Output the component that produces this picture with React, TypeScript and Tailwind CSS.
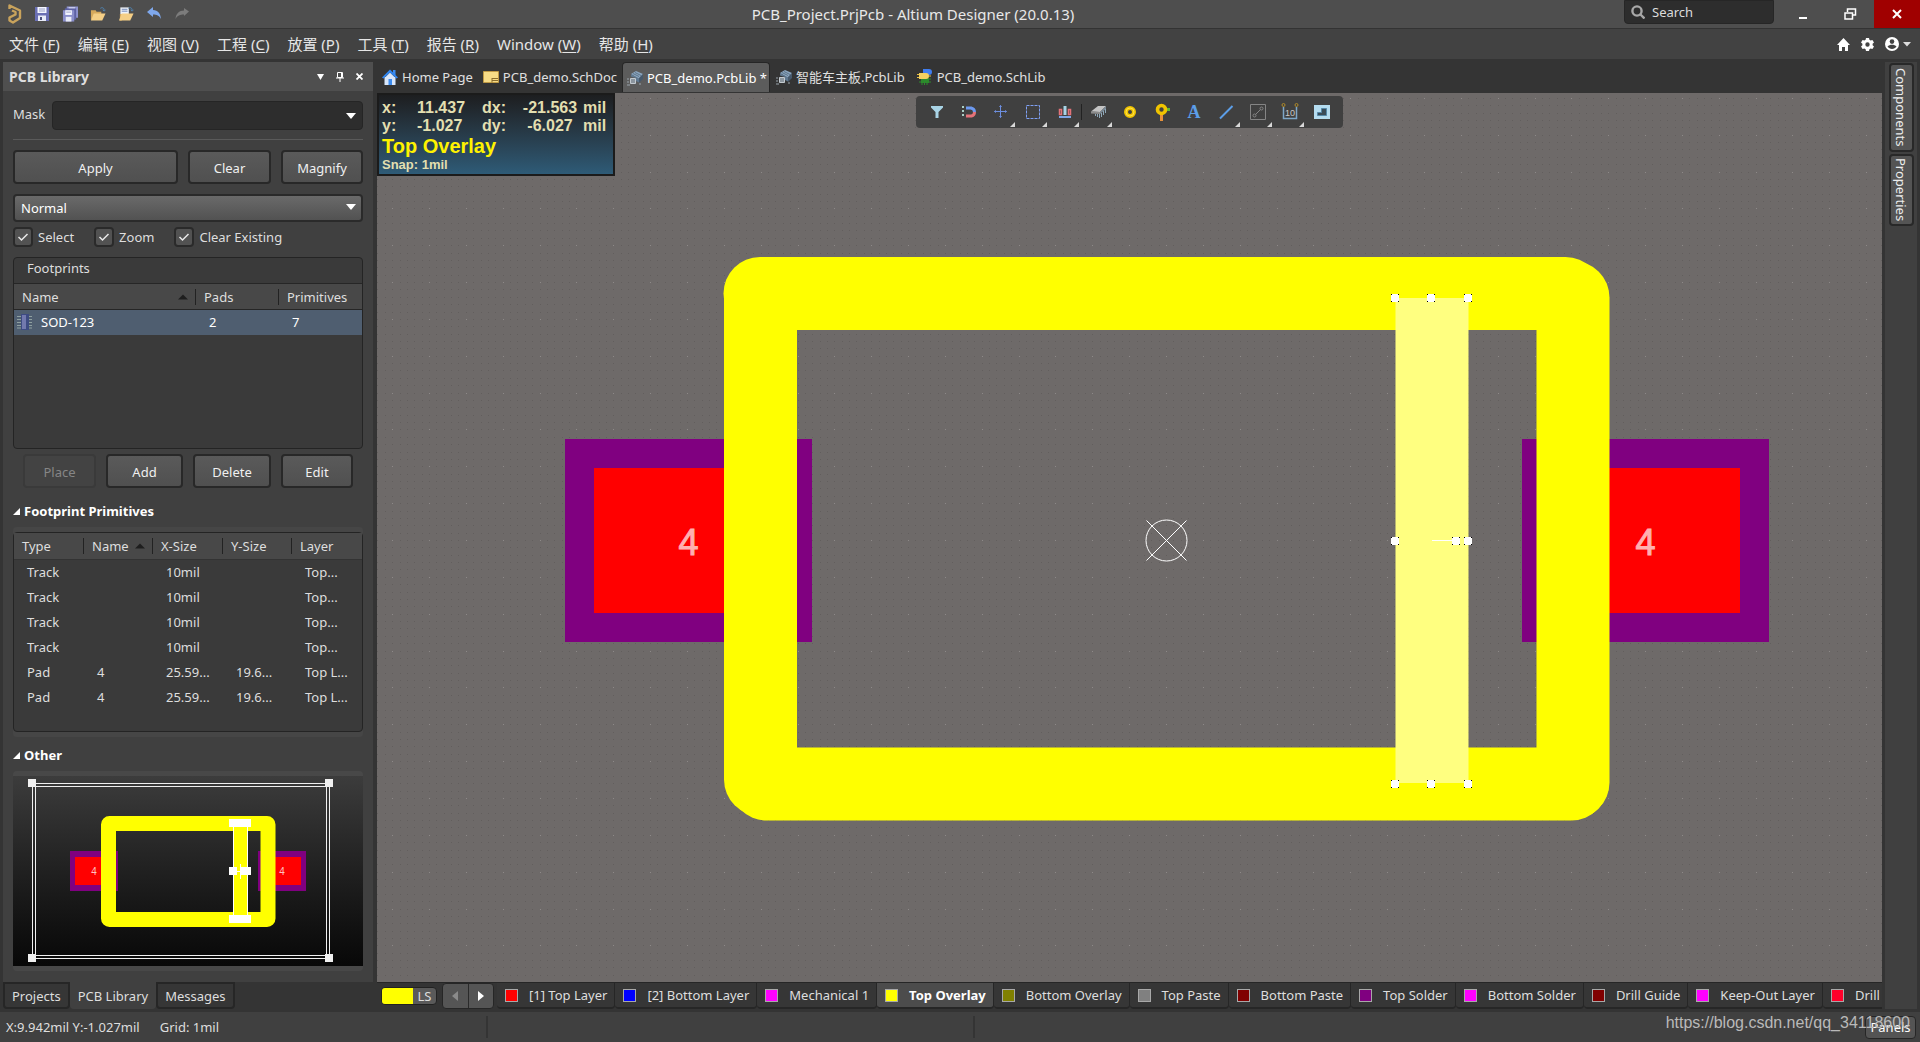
import type { ReactNode } from 'react';

const FONT = "font-['Noto_Sans','Noto_Sans_CJK_SC',sans-serif]";

const menus = [
  ['文件', 'F'],
  ['编辑', 'E'],
  ['视图', 'V'],
  ['工程', 'C'],
  ['放置', 'P'],
  ['工具', 'T'],
  ['报告', 'R'],
  ['Window', 'W'],
  ['帮助', 'H'],
];

const primitives = [
  ['Track', '', '10mil', '', 'Top...'],
  ['Track', '', '10mil', '', 'Top...'],
  ['Track', '', '10mil', '', 'Top...'],
  ['Track', '', '10mil', '', 'Top...'],
  ['Pad', '4', '25.59...', '19.6...', 'Top L...'],
  ['Pad', '4', '25.59...', '19.6...', 'Top L...'],
];

const layers = [
  { name: '[1] Top Layer', color: 'bg-[#ff0000]' },
  { name: '[2] Bottom Layer', color: 'bg-[#0000ff]' },
  { name: 'Mechanical 1', color: 'bg-[#ff00ff]' },
  { name: 'Top Overlay', color: 'bg-[#ffff00]', active: true },
  { name: 'Bottom Overlay', color: 'bg-[#808000]' },
  { name: 'Top Paste', color: 'bg-[#808080]' },
  { name: 'Bottom Paste', color: 'bg-[#800000]' },
  { name: 'Top Solder', color: 'bg-[#800080]' },
  { name: 'Bottom Solder', color: 'bg-[#ff00ff]' },
  { name: 'Drill Guide', color: 'bg-[#800000]' },
  { name: 'Keep-Out Layer', color: 'bg-[#ff00ff]' },
  { name: 'Drill Drawing', color: 'bg-[#ff002a]' },
];

function Logo() {
  return (
    <svg width="14" height="20" viewBox="0 0 14 20" fill="none" stroke="#c9a35c" strokeWidth="2.4">
      <path d="M1.5 5V1.5L12 6.5V14L5 18.5 1.5 16.5v-3L7.5 10.5V8L4 6.5" strokeLinejoin="round" />
    </svg>
  );
}

function SaveIcon() {
  return (
    <svg width="16" height="16" viewBox="0 0 16 16">
      <path d="M1 1h14v14H1z" fill="#6a6fb4" />
      <path d="M3.5 1h9v6h-9z" fill="#f4f6ff" />
      <path d="M5 3h6M5 5h6" stroke="#9aa0c4" />
      <path d="M4 9.5h8V15H4z" fill="#e8ebf8" />
      <path d="M6 11h2v3H6z" fill="#4a4f7c" />
    </svg>
  );
}

function SaveAllIcon() {
  return (
    <svg width="17" height="16" viewBox="0 0 17 16">
      <path d="M5 0h12v12H5z" fill="#8f93cf" />
      <path d="M7 1h7v3H7z" fill="#eef0ff" />
      <path d="M3 2h12v12H3z" fill="#5d61a4" />
      <path d="M1 4h12v12H1z" fill="#8a8ecb" />
      <path d="M3.5 4h7v5h-7z" fill="#f4f6ff" />
      <path d="M4.5 6h5" stroke="#9aa0c4" />
      <path d="M4 11h6v5H4z" fill="#e8ebf8" />
    </svg>
  );
}

function OpenIcon({ doc }: { doc?: boolean }) {
  return (
    <svg width="17" height="16" viewBox="0 0 17 16">
      {doc && <path d="M2.5 1h9v9h-9z" fill="#eef2f8" />}
      {doc && <path d="M4 3h6M4 5h6" stroke="#6f86b8" />}
      {doc && <path d="M2 8h2v7H2z" fill="#d6a95c" />}
      {!doc && <path d="M1 4h5l1 1.5h5V14H1z" fill="#d6a95c" />}
      <path d="M4 7.5h12.5L13 15H1z" fill="#f5cf86" />
      <path d="M11 2c2-1.5 4-.5 4 2M13.5 3.5L15 5l1.5-1.5" fill="none" stroke="#4f86b8" />
    </svg>
  );
}

function UndoIcon() {
  return (
    <svg width="16" height="14" viewBox="0 0 16 14">
      <path d="M1 5l6-5v3c5 0 7.5 3.5 8 9-2-3.5-4-4.5-8-4.5V10z" fill="#7fa8ec" />
    </svg>
  );
}

function RedoIcon() {
  return (
    <svg width="16" height="14" viewBox="0 0 16 14">
      <path d="M15 4.5L10 1v2.5C5 3.5 2 6.5 1.5 12c2-3.5 4.5-4.5 8.5-4.5V9z" fill="#7c7c7c" />
    </svg>
  );
}

function Caret({ className }: { className?: string }) {
  return (
    <svg width="10" height="6" viewBox="0 0 10 6" className={className}>
      <path d="M0 0h10L5 6z" fill="#fff" />
    </svg>
  );
}

function TitleBar() {
  return (
    <header className="flex h-[29px] shrink-0 items-start border-b border-[#333] bg-[#4e4e4e]">
      <div className="flex h-7 items-center gap-3 pl-2">
        <Logo />
        <button aria-label="Save" className="flex w-4 justify-center"><SaveIcon /></button>
        <button aria-label="Save all" className="flex w-4 justify-center"><SaveAllIcon /></button>
        <button aria-label="Open" className="flex w-4 justify-center"><OpenIcon /></button>
        <button aria-label="Open project" className="flex w-4 justify-center"><OpenIcon doc /></button>
        <button aria-label="Undo" className="flex w-4 justify-center"><UndoIcon /></button>
        <button aria-label="Redo" className="flex w-4 justify-center"><RedoIcon /></button>
      </div>
      <h1 className="flex-1 pl-3 text-center text-[15px] leading-7 text-[#e8e8e8]">
        PCB_Project.PrjPcb - Altium Designer (20.0.13)
      </h1>
      <label className="mr-[5px] flex h-6 w-[150px] items-center gap-[7px] rounded-b border border-[#262626] bg-[#2d2d2d] px-1.5">
        <svg width="14" height="14" viewBox="0 0 14 14" fill="none" stroke="#a8a8a8" strokeWidth="2.4" className="shrink-0">
          <circle cx="6" cy="6" r="4.6" />
          <path d="M9.5 9.5L13.5 13.5" />
        </svg>
        <input aria-label="Search" placeholder="Search" className="w-full min-w-0 bg-transparent text-[13px] leading-5 text-white outline-none placeholder:text-[#dcdcdc]" />
      </label>
      <button aria-label="Minimize" className="flex h-7 w-[47px] items-center justify-center">
        <svg width="10" height="12"><path d="M1 9h8v2H1z" fill="#fff" /></svg>
      </button>
      <button aria-label="Restore" className="flex h-7 w-12 items-center justify-center">
        <svg width="13" height="12" fill="none" stroke="#fff" strokeWidth="1.5">
          <path d="M3.5 4V1h8v6H8.5" />
          <path d="M1 5h7.5v6H1z" />
        </svg>
      </button>
      <button aria-label="Close" className="flex h-7 w-[46px] items-center justify-center bg-[#a00000]">
        <svg width="10" height="10"><path d="M1 1l8 8M9 1L1 9" stroke="#fff" strokeWidth="2" /></svg>
      </button>
    </header>
  );
}

function MenuBar() {
  return (
    <nav className="flex h-[30px] shrink-0 items-center justify-between bg-[#424242] px-[9px]">
      <div className="flex gap-[18px]">
        {menus.map(([label, key]) => (
          <button key={key} className="text-[15px] leading-6 text-[#e6e6e6]">
            {label} (<span className="underline underline-offset-2">{key}</span>)
          </button>
        ))}
      </div>
      <div className="flex items-center gap-[11px]">
        <button aria-label="Home">
          <svg width="13" height="13" viewBox="0 0 13 13"><path d="M6.5 0L13 7h-2v6H8V9H5v4H2V7H0z" fill="#fff" /></svg>
        </button>
        <button aria-label="Settings">
          <svg width="13" height="13" viewBox="0 0 13 13">
            <path fillRule="evenodd" fill="#fff" d="M5 0h3l.4 1.8 1.2.7 1.8-.6L13 4.5l-1.4 1.3v1.4L13 8.5l-1.6 2.6-1.8-.6-1.2.7L8 13H5l-.4-1.8-1.2-.7-1.8.6L0 8.500l1.400-1.300V5.800L0 4.500l1.600-2.600 1.800.6 1.200-.7zM6.5 4.3a2.2 2.2 0 100 4.4 2.2 2.2 0 000-4.4z" />
          </svg>
        </button>
        <button aria-label="Account" className="flex items-center gap-1">
          <svg width="14" height="14" viewBox="0 0 14 14">
            <circle cx="7" cy="7" r="7" fill="#fff" />
            <circle cx="7" cy="4.6" r="2.3" fill="#424242" />
            <path d="M2.5 9.5c2-2.5 7-2.5 9 0-2 3.3-7 3.3-9 0z" fill="#424242" />
          </svg>
          <svg width="8" height="5"><path d="M0 0h8L4 4.5z" fill="#ddd" /></svg>
        </button>
      </div>
    </nav>
  );
}

function PanelButton({ children, className, disabled }: { children: ReactNode; className?: string; disabled?: boolean }) {
  const look = disabled
    ? 'border-[#3a3a3a] bg-[#434343] text-[#868686]'
    : 'border-[#282828] bg-linear-to-b from-[#5a5a5a] to-[#505050] text-[#f0f0f0]';
  return (
    <button disabled={disabled} className={`h-[34px] rounded border-2 pt-px ${look} ${className ?? ''}`}>
      {children}
    </button>
  );
}

function CheckField({ label }: { label: string }) {
  return (
    <label className="flex items-center gap-[5px]">
      <span className="relative flex size-5">
        <input type="checkbox" defaultChecked className="peer size-5 appearance-none rounded border-2 border-[#2a2a2a] bg-[#525252]" />
        <svg width="20" height="20" className="pointer-events-none absolute inset-0 hidden peer-checked:block">
          <path d="M5.5 10l3 3 6-6" fill="none" stroke="#e8e8e8" strokeWidth="1.5" />
        </svg>
      </span>
      {label}
    </label>
  );
}

function SortMark() {
  return <svg width="10" height="6"><path d="M0 5.5h10L5 .5z" fill="#1e1e1e" /></svg>;
}

function HeadCell({ children, last }: { children: ReactNode; last?: boolean }) {
  return (
    <th className="p-0 font-normal">
      <div className={`flex h-4 items-center justify-between pl-2 pr-[7px] text-left ${last ? '' : 'border-r border-[#222]'}`}>
        {children}
      </div>
    </th>
  );
}

function SectionTitle({ children }: { children: ReactNode }) {
  return (
    <h3 className="flex items-center gap-1 text-[13px] font-bold leading-5 text-white">
      <svg width="7" height="7"><path d="M7 0v7H0z" fill="#fff" /></svg>
      {children}
    </h3>
  );
}

function Preview() {
  const corners = [[15, 3], [312, 3], [15, 178], [312, 178]];
  return (
    <div className="h-[200px] rounded bg-[#484848] py-[5px]">
      <svg viewBox="0 0 350 190" className="h-[190px] w-full bg-linear-to-b from-[#3c3c3c] to-[#080808]">
        <path d="M57 75h48v40H57zM245 75h48v40h-48z" fill="#800080" />
        <path d="M62 81h36v28H62zM252 81h36v28h-36z" fill="#f00" />
        <g fill="#ffc0c0" fontSize="10" textAnchor="middle" fontFamily="Liberation Sans, sans-serif">
          <text x="81" y="99">4</text>
          <text x="269" y="99">4</text>
        </g>
        <rect x="95.5" y="47.5" width="159.5" height="96" rx="1" fill="none" stroke="#ff0" strokeWidth="15" strokeLinejoin="round" />
        <path d="M220.5 50.5h14v90h-14z" fill="#ff0" stroke="#fff" />
        <path d="M216 43h22v8h-22zM216 139h22v8h-22zM216 91h8v8h-8zM228 91h10v8h-10zM227 88h1v15h-1zM220 95h14v1h-14z" fill="#fff" />
        <path d="M19.5 7.5h297v175h-297zM22.5 10.5h291v169h-291z" fill="none" stroke="#f0f0f0" />
        {corners.map(([x, y]) => (
          <rect key={`${x}-${y}`} x={x} y={y} width="8" height="8" fill="#f0f0f0" />
        ))}
      </svg>
    </div>
  );
}

function LibraryPanel() {
  return (
    <aside className="flex w-[370px] shrink-0 flex-col text-[13px] leading-5 text-[#dedede]">
      <div className="flex h-[29px] shrink-0 items-center justify-between bg-[#4f4f4f] pl-1.5 pr-2.5">
        <h2 className="text-sm font-bold">PCB Library</h2>
        <div className="flex items-center gap-3">
          <button aria-label="Panel menu"><svg width="7" height="6"><path d="M0 0h7L3.5 6z" fill="#fff" /></svg></button>
          <button aria-label="Pin"><svg width="8" height="10"><path d="M1.5.5h5v5h-5zM0 6h8M4 6v4M5.5 1v4" stroke="#fff" fill="none" /></svg></button>
          <button aria-label="Close panel"><svg width="7" height="7"><path d="M.5.5l6 6M6.5.5l-6 6" stroke="#fff" strokeWidth="1.8" /></svg></button>
        </div>
      </div>
      <div className="flex flex-1 flex-col bg-[#404040] px-2.5 pt-2.5">
        <div className="flex items-start justify-between">
          <label htmlFor="mask" className="leading-[26px]">Mask</label>
          <div className="relative flex">
            <input id="mask" className="h-[29px] w-[311px] rounded border border-[#252525] bg-[#2d2d2d] px-2 pr-7 outline-none" />
            <Caret className="pointer-events-none absolute right-[7px] top-3" />
          </div>
        </div>
        <hr className="mt-[9px] border-[#5a5a5a]" />
        <div className="mt-2.5 flex gap-2.5">
          <PanelButton className="flex-1">Apply</PanelButton>
          <PanelButton className="w-[83px]">Clear</PanelButton>
          <PanelButton className="w-[82px]">Magnify</PanelButton>
        </div>
        <div className="relative mt-2.5 flex">
          <select aria-label="Display mode" className="h-7 w-full appearance-none rounded border-2 border-[#2a2a2a] bg-linear-to-b from-[#6a6a6a] to-[#525252] px-1.5 text-white outline-none">
            <option>Normal</option>
          </select>
          <Caret className="pointer-events-none absolute right-[7px] top-2.5" />
        </div>
        <div className="mt-[5px] flex gap-5">
          <CheckField label="Select" />
          <CheckField label="Zoom" />
          <CheckField label="Clear Existing" />
        </div>
        <div className="mt-2.5 h-48 rounded border border-[#242424] bg-[#3a3a3a]">
          <h3 className="h-[25px] pl-[13px] leading-5">Footprints</h3>
          <table className="w-full table-fixed">
            <colgroup>
              <col className="w-[182px]" />
              <col className="w-[83px]" />
              <col />
            </colgroup>
            <thead>
              <tr className="h-[26px] border-y border-[#262626] bg-[#484848]">
                <HeadCell>Name <SortMark /></HeadCell>
                <HeadCell>Pads</HeadCell>
                <HeadCell last>Primitives</HeadCell>
              </tr>
            </thead>
            <tbody>
              <tr className="h-[25px] bg-[#4f5e70] text-white">
                <td className="p-0">
                  <div className="flex items-center gap-[9px] pl-[3px]">
                    <svg width="15" height="16" viewBox="0 0 15 16">
                      <path d="M0 2.5h15M0 5.5h15M0 8.5h15M0 11.5h15M0 14h15" stroke="#8fa0a0" />
                      <path d="M4 0h8v16H4z" fill="#3d4b82" />
                      <path d="M5 1h4v14H5z" fill="#7279ae" />
                    </svg>
                    SOD-123
                  </div>
                </td>
                <td className="p-0 pl-[13px]">2</td>
                <td className="p-0 pl-[13px]">7</td>
              </tr>
            </tbody>
          </table>
        </div>
        <div className="mt-[5px] flex gap-2.5 px-2.5">
          <PanelButton disabled className="w-[73px]">Place</PanelButton>
          <PanelButton className="w-[77px]">Add</PanelButton>
          <PanelButton className="w-[78px]">Delete</PanelButton>
          <PanelButton className="w-[72px]">Edit</PanelButton>
        </div>
        <div className="mt-[13px]">
          <SectionTitle>Footprint Primitives</SectionTitle>
        </div>
        <div className="mt-1.5 rounded bg-[#464646] py-[5px]">
          <div className="h-[200px] rounded border border-[#242424] bg-[#3a3a3a]">
            <table className="w-full table-fixed">
              <colgroup>
                <col className="w-[70px]" />
                <col className="w-[69px]" />
                <col className="w-[70px]" />
                <col className="w-[69px]" />
                <col />
              </colgroup>
              <thead>
                <tr className="h-[26px] border-b border-[#333] bg-[#484848]">
                  <HeadCell>Type</HeadCell>
                  <HeadCell>Name <SortMark /></HeadCell>
                  <HeadCell>X-Size</HeadCell>
                  <HeadCell>Y-Size</HeadCell>
                  <HeadCell last>Layer</HeadCell>
                </tr>
              </thead>
              <tbody>
                {primitives.map((row, i) => (
                  <tr key={i} className="h-[25px]">
                    {row.map((cell, j) => (
                      <td key={j} className="p-0 pl-[13px]">{cell}</td>
                    ))}
                  </tr>
                ))}
              </tbody>
            </table>
          </div>
        </div>
        <div className="mb-1.5 mt-2">
          <SectionTitle>Other</SectionTitle>
        </div>
        <Preview />
      </div>
      <div className="flex h-[27px] shrink-0">
        <button className="rounded-b border-2 border-[#262626] bg-[#363636] px-[7px]">Projects</button>
        <button className="rounded-b bg-[#404040] px-2">PCB Library</button>
        <button className="rounded-b border-2 border-[#262626] bg-[#363636] px-[7px]">Messages</button>
      </div>
    </aside>
  );
}

function HomeIcon() {
  return (
    <svg width="16" height="16" viewBox="0 0 16 16">
      <path d="M2.5 8h11v8h-11z" fill="#d8e6fa" />
      <path d="M11 1h2.5v5H11z" fill="#3c8cf0" />
      <path d="M3 8.5L8 3.5l5 5z" fill="#d8e6fa" />
      <path d="M0 8.5L8 .5l8 8-1.5 1L8 3.5 1.5 9.5z" fill="#2f86f2" />
      <path d="M6.5 10H10v6H6.5z" fill="#3c8cf0" />
    </svg>
  );
}

function SchDocIcon() {
  return (
    <svg width="16" height="14" viewBox="0 0 16 14">
      <path d="M.5 1.5h15v11H.5z" fill="#f7dc86" stroke="#c09a45" />
      <path d="M9 8.5h6M9 10.5h6M9 8v4.5" stroke="#8a6d2c" fill="none" />
    </svg>
  );
}

function PcbLibIcon() {
  return (
    <svg width="16" height="16" viewBox="0 0 16 16">
      <path d="M4 4l5-3 7 3-4 5z" fill="#8ba6c0" />
      <path d="M12 8l4-4v5l-4 4z" fill="#46596c" />
      <path d="M4 4l8 4.5v4L9 11V8L4 6.5z" fill="#5f7890" />
      <path d="M3.5 8.5h5v5h-5z" fill="#8b959e" stroke="#c3cad0" />
      <path d="M0 9h2M0 12h2M0 15h3M13 13v2" stroke="#9aa4ac" />
      <path d="M6 3.5l6 3M8 2.5l6 3" stroke="#5d7488" />
    </svg>
  );
}

function SchLibIcon() {
  return (
    <svg width="16" height="16" viewBox="0 0 16 16">
      <path d="M6 0h6a3 3 0 010 6H6z" fill="#3f7df0" />
      <path d="M4 9h8v5H4z" fill="#2c8a2c" />
      <path d="M5 14v2M7.5 14v2M10 14v2M12 10h2M12 13h2M2 13h2" stroke="#2c8a2c" />
      <path d="M2 4h7a3 3 0 010 6H2z" fill="#f4d060" />
      <path d="M0 5.5h2M0 8.5h2M12 7h2" stroke="#e8c040" />
    </svg>
  );
}

function DocumentTabs() {
  return (
    <div className="flex h-[30px] shrink-0 items-stretch text-[13px] leading-5 text-[#e0e0e0]">
      <button className="flex items-center gap-1 px-[5px]"><HomeIcon />Home Page</button>
      <button className="flex items-center gap-1 px-[5px]"><SchDocIcon />PCB_demo.SchDoc</button>
      <button className="flex items-center gap-1 rounded-t border border-b-0 border-[#262626] bg-[#5c5c5c] pl-1 pr-0.5 text-white"><PcbLibIcon />PCB_demo.PcbLib *</button>
      <button className="flex items-center gap-1 px-1.5"><PcbLibIcon />智能车主板.PcbLib</button>
      <button className="flex items-center gap-1 px-1.5"><SchLibIcon />PCB_demo.SchLib</button>
    </div>
  );
}

function gridPath(pitch: number, cols: number, rows: number) {
  let d = '';
  for (let i = -cols; i <= cols; i++) {
    for (let j = -rows; j <= rows; j++) {
      d += `M${Math.round(i * pitch) - 0.5} ${Math.round(j * pitch)}h1`;
    }
  }
  return d;
}

const fineGrid = gridPath(7.37, 108, 62);
const coarseGrid = gridPath(36.85, 22, 12);

const handles = [
  [228, -243], [264, -243], [301, -243],
  [228, 0], [289, 0], [301, 0],
  [228, 243], [264, 243], [301, 243],
];

// Coordinates are relative to the footprint origin mark.
function Board() {
  return (
    <svg
      viewBox="-789.5 -447.5 1505 889"
      preserveAspectRatio="xMidYMid slice"
      className="absolute inset-0 h-full w-full bg-[#6e6a69]"
    >
      <path d={fineGrid} stroke="#625e5d" shapeRendering="crispEdges" />
      <path d={coarseGrid} stroke="#8d8988" shapeRendering="crispEdges" />
      <path d="M-601.5-101.5h247v203h-247zM355.5-101.5h247v203h-247z" fill="#800080" />
      <path d="M-572.5-72.5h188v145h-188zM385.5-72.5h188v145h-188z" fill="#f00" />
      <g fill="#ffb0b0" fontSize="36" textAnchor="middle" fontFamily="Liberation Sans, sans-serif" stroke="#ffb0b0">
        <text x="-478" y="14">4</text>
        <text x="479" y="14">4</text>
      </g>
      <g stroke="#ff0" strokeWidth="73" strokeLinecap="round">
        <path d="M-406.5-247H399" />
        <path d="M-406-243V239" />
        <path d="M-400 243.5H405" />
        <path d="M406.5-243V242" />
      </g>
      <path d="M229-242.5h73v485h-73z" fill="#ffff80" />
      <path d="M265.5 0h25" stroke="#fff" />
      {handles.map(([x, y]) => (
        <g key={`${x},${y}`} shapeRendering="crispEdges">
          <rect x={x - 4} y={y - 4} width="8" height="8" fill="#000" />
          <path d={`M${x - 3} ${y - 4}h6v1h1v6h-1v1h-6v-1h-1v-6h1z`} fill="#fff" />
        </g>
      ))}
      <g fill="none" stroke="#fff">
        <circle r="20.5" />
        <path d="M-20-20l40 40M20-20l-40 40" />
      </g>
    </svg>
  );
}

function Tool({ label, menu, children }: { label: string; menu?: boolean; children: ReactNode }) {
  return (
    <button aria-label={label} className="relative flex size-8 items-center justify-center">
      <svg width="18" height="18" viewBox="0 0 18 18" fill="none" className="overflow-visible">{children}</svg>
      {menu && (
        <svg width="5" height="5" className="absolute bottom-px right-0.5"><path d="M5 0v5H0z" fill="#d8d8d8" /></svg>
      )}
    </button>
  );
}

function ActiveBar() {
  return (
    <div className="absolute left-[539px] top-[3px] flex h-8 rounded bg-[#404040] px-[5px]">
      <Tool label="Filter"><path d="M3 3h12v1.5L10.5 9v6h-3V9L3 4.5z" fill="#a9d4e6" /></Tool>
      <Tool label="Snap">
        <path d="M6 5h5.5" stroke="#6d9af0" strokeWidth="3" />
        <path d="M11 5a4.3 4.3 0 013.5 4" stroke="#6d9af0" strokeWidth="3" />
        <path d="M6 13h5.5A4 4 0 0014.5 9" stroke="#e37278" strokeWidth="3" />
        <path d="M2 4h2M2 8h2M2 12h2" stroke="#a9cfc6" strokeWidth="2" />
      </Tool>
      <Tool label="Move" menu>
        <path d="M2.5 8.5h12M8.5 2.5v12M7.5 4l1-1.5 1 1.5M7.5 13l1 1.5 1-1.5M4 7.5l-1.5 1 1.5 1M13 7.5l1.5 1-1.5 1" stroke="#6d8fe0" />
      </Tool>
      <Tool label="Select area" menu><path d="M2.5 2.5h13v13h-13z" stroke="#7fa0f4" strokeDasharray="3 1" /></Tool>
      <Tool label="Align" menu>
        <path d="M7.5 3h3v9h-3z" fill="#a9d4e6" />
        <path d="M3.5 6.5h2v5h-2zM12.5 6.5h2v5h-2z" stroke="#e37278" strokeWidth="1.5" />
        <path d="M3 14h12" stroke="#7fa8e8" strokeWidth="2" />
      </Tool>
      <span className="my-2 w-px bg-[#222]" />
      <Tool label="Component" menu>
        <path d="M2 8.5l7-5.5h8l-6 6z" fill="#c4c4c4" />
        <path d="M2 8.5l9 .5v2l-9-.5z" fill="#8c8c8c" />
        <path d="M11 9l6-6v3l-6 5z" fill="#7a8894" />
        <path d="M6.5 11v2M8.5 11v3M10.5 11v4M12.5 10v4M14.5 8v4M16.5 6v4" stroke="#90a8b8" />
      </Tool>
      <Tool label="Pad">
        <circle cx="9" cy="9" r="4" stroke="#f0c400" strokeWidth="4" />
        <circle cx="9" cy="9" r="4" stroke="#ffe04a" />
      </Tool>
      <Tool label="Via">
        <path d="M7 10h3v8H7z" fill="#e8923a" />
        <path d="M12 5h5v3h-5z" fill="#63b82e" />
        <circle cx="8.5" cy="6.5" r="4" stroke="#f0c400" strokeWidth="3.6" />
      </Tool>
      <Tool label="String">
        <text x="9" y="15" fontSize="18" fontWeight="bold" textAnchor="middle" fill="#5c9ee8" fontFamily="Liberation Serif, serif">A</text>
      </Tool>
      <Tool label="Line" menu><path d="M3 15.5L15.5 3" stroke="#5c9ee8" strokeWidth="2" /></Tool>
      <Tool label="Dimension" menu>
        <path d="M1.5 1.5h15v15h-15z" stroke="#858585" />
        <path d="M6.5 11.5l5-5" stroke="#858585" />
        <circle cx="5.5" cy="12.5" r="1.5" stroke="#858585" />
        <circle cx="12.5" cy="5.5" r="1.5" stroke="#858585" />
      </Tool>
      <Tool label="Coordinate" menu>
        <path d="M2.5 4v11.5h13V4" stroke="#7ea6c8" strokeWidth="1.5" />
        <circle cx="2.5" cy="2" r="1.5" stroke="#b08a28" />
        <circle cx="15.5" cy="2" r="1.5" stroke="#b08a28" />
        <text x="9" y="12.5" fontSize="9" textAnchor="middle" fill="#c8c8c8" fontFamily="Liberation Sans, sans-serif">10</text>
      </Tool>
      <Tool label="Region">
        <path d="M1 2h16v14H1z" fill="#b4dcf0" />
        <path d="M8.5 5.5h5v7h-9v-3h4z" fill="#3a4c58" stroke="#5588a8" />
      </Tool>
    </div>
  );
}

function HeadsUp() {
  return (
    <div className="absolute left-0 top-0 h-[83px] w-[238px] border-2 border-[#1b1b1b] bg-linear-to-b from-[#1d1e20] to-[#2e5b77] pl-[3px] pt-1 font-['Liberation_Sans',sans-serif] text-[16px] font-bold leading-[18px] text-[#e3dfb0]">
      <div className="grid grid-cols-[35px_65px_40px_56px_auto]">
        <span>x:</span><span>11.437</span><span>dx:</span><span className="text-center">-21.563</span><span className="pl-[5px]">mil</span>
        <span>y:</span><span>-1.027</span><span>dy:</span><span className="text-center">-6.027</span><span className="pl-[5px]">mil</span>
      </div>
      <div className="text-xl leading-[23px] text-[#fff200]">Top Overlay</div>
      <div className="text-[13px] leading-[14px]">Snap: 1mil</div>
    </div>
  );
}

function LayerBar() {
  return (
    <div className="flex h-[27px] shrink-0 overflow-hidden border-t border-[#262626] text-[13px] leading-5 text-[#dedede]">
      <button className="ml-1 mr-[5px] mt-1 flex h-[18px] w-14 shrink-0 overflow-hidden rounded-sm border border-[#222] bg-[#5a5a5a]">
        <span className="h-full w-[31px] bg-[#ff0]" />
        <span className="flex-1 leading-4">LS</span>
      </button>
      <div className="mr-[3px] flex w-[52px] shrink-0 rounded border border-[#262626] bg-[#555]">
        <button aria-label="Previous layers" className="flex flex-1 items-center justify-center border-r border-[#2a2a2a]">
          <svg width="6" height="10"><path d="M6 0v10L0 5z" fill="#8a8a8a" /></svg>
        </button>
        <button aria-label="Next layers" className="flex flex-1 items-center justify-center">
          <svg width="6" height="10"><path d="M0 0v10l6-5z" fill="#fff" /></svg>
        </button>
      </div>
      {layers.map((layer) => (
        <button
          key={layer.name}
          className={`flex shrink-0 items-center gap-[11px] rounded-b border-b-2 border-r border-[#262626] pl-2 pr-[7px] ${layer.active ? 'bg-[#4c4c4c] font-bold text-white' : 'bg-[#363636]'}`}
        >
          <span className={`size-[13px] border border-[#a8a8a8] ${layer.color}`} />
          {layer.name}
        </button>
      ))}
    </div>
  );
}

function SideTabs() {
  return (
    <div className="mx-[3px] flex w-8 shrink-0 flex-col items-center gap-0.5 bg-[#404040] pt-px text-[13px] leading-5 text-[#ececec]">
      <button className="h-[89px] w-[25px] rounded border-2 border-[#282828] bg-[#545454] [writing-mode:vertical-rl]">Components</button>
      <button className="h-[72px] w-[25px] rounded border-2 border-[#282828] bg-[#545454] [writing-mode:vertical-rl]">Properties</button>
    </div>
  );
}

function StatusBar() {
  return (
    <footer className="relative flex h-[30px] shrink-0 items-center bg-[#404040] px-1.5 text-[13px] leading-5 text-[#dedede]">
      <div className="flex w-[480px] gap-5 whitespace-nowrap">
        <span>X:9.942mil Y:-1.027mil</span>
        <span>Grid: 1mil</span>
      </div>
      <span className="h-[22px] w-0.5 bg-[#343434]" />
      <span className="ml-[485px] h-[22px] w-0.5 bg-[#343434]" />
      <button className="-mr-0.5 ml-auto h-[23px] w-[51px] rounded border border-[#262626] bg-[#545454] leading-5 text-white">Panels</button>
      <span className="absolute right-2.5 top-0 font-['Liberation_Sans',sans-serif] text-[16px] leading-[22px] text-[#b9b9b9]">
        https://blog.csdn.net/qq_34118600
      </span>
    </footer>
  );
}

export default function App() {
  return (
    <div className={`flex h-screen flex-col overflow-hidden bg-[#343434] ${FONT}`}>
      <TitleBar />
      <MenuBar />
      <div className="flex min-h-0 flex-1 pb-[3px] pl-[3px] pt-[3px]">
        <LibraryPanel />
        <main className="ml-1 flex min-w-0 flex-1 flex-col">
          <DocumentTabs />
          <div className="relative mt-px min-h-0 flex-1 overflow-hidden">
            <Board />
            <HeadsUp />
            <ActiveBar />
          </div>
          <LayerBar />
        </main>
        <SideTabs />
      </div>
      <StatusBar />
    </div>
  );
}
